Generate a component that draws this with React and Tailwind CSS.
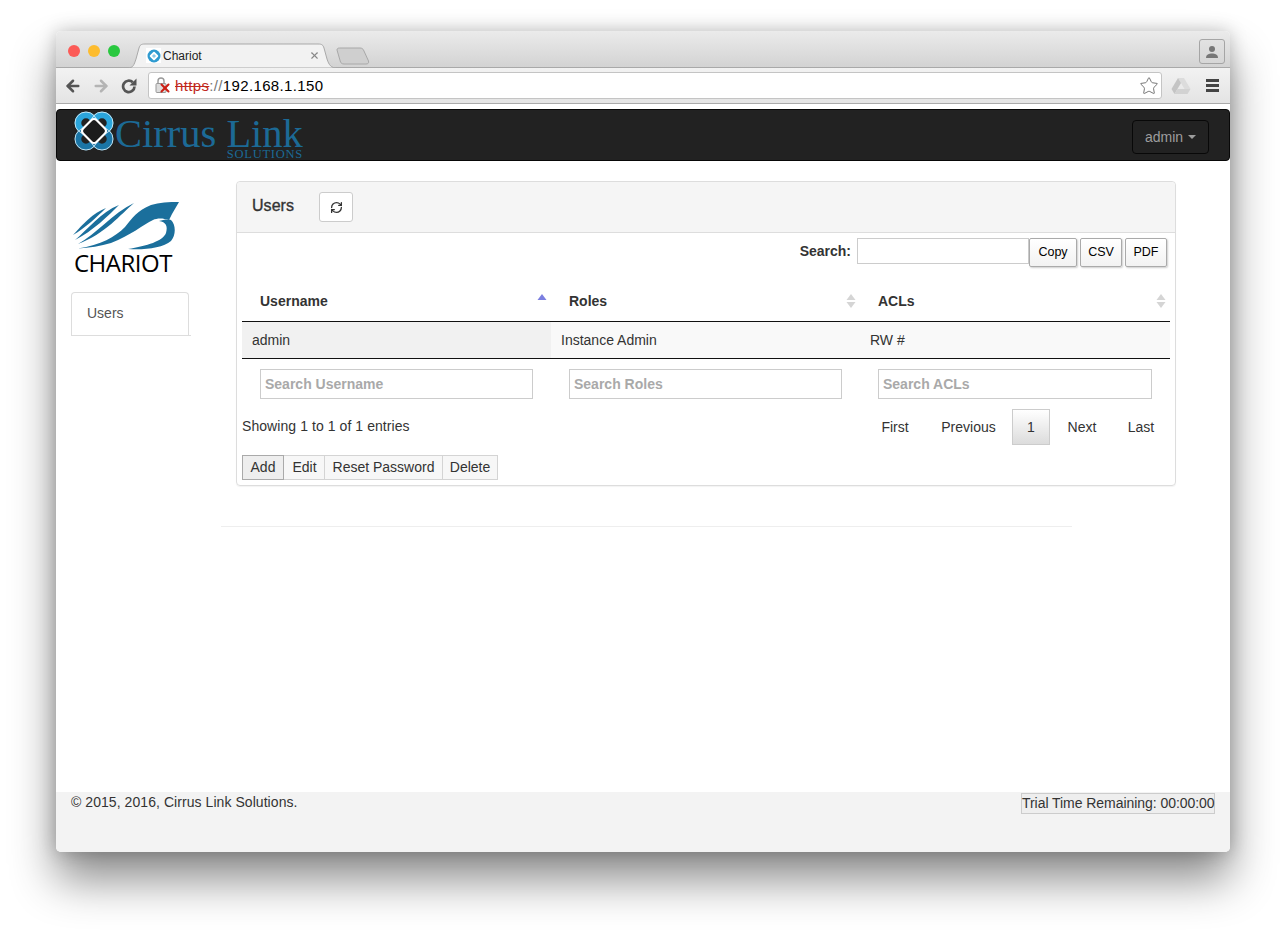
import { ArrowLeft, ArrowRight, Star, RefreshCw, X } from "lucide-react";

const Sort = ({ active }) => (
    <svg width="10" height="16" viewBox="0 0 10 16" className="shrink-0">
        <path d="M5 1 L9.500 7 H0.500 Z" fill={active ? "#7b7fe0" : "#d5d5d5"} />
        {!active && <path d="M5 15 L9.500 9 H0.500 Z" fill="#d5d5d5" />}
    </svg>
);

const CirrusMark = ({ size }) => (
    <svg width={size} height={size} viewBox="0 0 40 40" fill="none" className="shrink-0">
        <circle cx="12" cy="12" r="8" stroke="#2ba5dc" strokeWidth="6.500" />
        <circle cx="28" cy="12" r="8" stroke="#2ba5dc" strokeWidth="6.500" />
        <circle cx="12" cy="28" r="8" stroke="#1b75a6" strokeWidth="6.500" />
        <circle cx="28" cy="28" r="8" stroke="#1b75a6" strokeWidth="6.500" />
        <circle cx="12" cy="12" r="11" stroke="#d5eef9" strokeWidth="0.900" />
        <circle cx="28" cy="12" r="11" stroke="#d5eef9" strokeWidth="0.900" />
        <circle cx="12" cy="28" r="11" stroke="#d5eef9" strokeWidth="0.900" />
        <circle cx="28" cy="28" r="11" stroke="#d5eef9" strokeWidth="0.900" />
        <rect x="10.500" y="10.500" width="19" height="19" rx="3.500" transform="rotate(45 20 20)" fill="#1c1c1c" stroke="#ffffff" strokeWidth="2.200" />
    </svg>
);

const CirrusSmall = () => (
    <span className="relative w-[15px] h-[15px] bg-white flex items-center justify-center shrink-0">
        <svg width="14" height="14" viewBox="0 0 14 14">
            <circle cx="7" cy="7" r="6.500" fill="#2f9bd0" />
            <rect x="3.700" y="3.700" width="6.600" height="6.600" rx="1" transform="rotate(45 7 7)" fill="#ffffff" />
            <rect x="5.500" y="5.500" width="3" height="3" transform="rotate(45 7 7)" fill="#8cc9e6" />
        </svg>
    </span>
);

function Browser() {
    return (
        <div className="rounded-t-[5px]">
            <div className="relative h-[37px] bg-gradient-to-b from-[#ebebeb] to-[#d3d3d3] rounded-t-[5px] border-b border-[#a9a9a9] flex">
                <div className="flex gap-[8px] pl-[12px] pt-[14px]">
                    <span className="w-[12px] h-[12px] rounded-full bg-[#fc5b57]"></span>
                    <span className="w-[12px] h-[12px] rounded-full bg-[#fdbc2e]"></span>
                    <span className="w-[12px] h-[12px] rounded-full bg-[#29c83f]"></span>
                </div>
                <div className="relative ml-[8px] mt-[12px] w-[209px] h-[25px] flex items-center pl-[18px] pr-[17px]">
                    <svg width="209" height="25" viewBox="0 0 209 25" className="absolute left-0 top-0">
                        <path d="M0 25 C5 25 6 22 8 16 L11 5 C12 2 13 1 17 1 H190 C194 1 195 2 196 5 L199 16 C201 22 203 25 209 25 Z" fill="#f2f2f2" stroke="#a9a9a9" />
                    </svg>
                    <CirrusSmall />
                    <span className="relative ml-[2px] text-[12px] text-[#222] grow">Chariot</span>
                    <X size={11} strokeWidth={2.400} className="relative text-[#888]" />
                </div>
                <svg width="34" height="18" viewBox="0 0 34 18" className="mt-[16px] -ml-[1px]">
                    <path d="M1 3 C1 1.500 2 1 3.500 1 H24 C26 1 27 2 27.500 3 L32.500 14 C33 16 32 17 30 17 H8 C6 17 5 16 4.500 15 Z" fill="#cfcfcf" stroke="#a8a8a8" />
                </svg>
                <div className="ml-auto mr-[5px] mt-[8px] w-[26px] h-[25px] rounded-[3px] border border-[#a5a5a5] bg-gradient-to-b from-[#e2e2e2] to-[#d6d6d6] flex items-center justify-center">
                    <svg width="16" height="16" viewBox="0 0 16 16" fill="#777">
                        <circle cx="8" cy="5" r="3" />
                        <path d="M2 14 C2 10.500 5 9.500 8 9.500 C11 9.500 14 10.500 14 14 Z" />
                    </svg>
                </div>
            </div>
            <div className="h-[36px] bg-gradient-to-b from-[#f2f2f2] to-[#e4e4e4] border-b border-[#aaaaaa] flex items-center">
                <ArrowLeft size={18} strokeWidth={3.400} className="ml-[8px] text-[#555]" />
                <ArrowRight size={18} strokeWidth={3.400} className="ml-[10px] text-[#b4b4b4]" />
                <svg width="16" height="16" viewBox="0 0 16 16" fill="none" className="ml-[11px]">
                    <path d="M13.500 8.500 a5.700 5.700 0 1 1 -1.700 -4.200" stroke="#555" strokeWidth="2.700" />
                    <path d="M15.500 0.500 V7.500 H8.500 Z" fill="#555" />
                </svg>
                <div className="ml-[11px] w-[1014px] h-[27px] bg-white rounded-[3px] border border-[#c4c4c4] flex items-center pl-[6px] pr-[2px]">
                    <span className="relative w-[15px] h-[17px] shrink-0">
                        <svg width="12" height="16" viewBox="0 0 12 16" fill="none">
                            <path d="M3 7 V4 a3 3 0 0 1 6 0 V7" stroke="#999" strokeWidth="1.400" />
                            <rect x="1" y="6.500" width="10" height="9" rx="1" fill="#ddd" stroke="#999" />
                        </svg>
                        <X size={14} strokeWidth={3.500} className="absolute left-[3px] top-[4px] text-[#cc1f14]" />
                    </span>
                    <span className="ml-[5px] mt-[1px] text-[15px] tracking-[0.35px]">
                        <span className="text-[#c0281c] line-through">https</span>
                        <span className="text-[#777]">://</span>
                        <span className="text-black">192.168.1.150</span>
                    </span>
                    <Star size={20} strokeWidth={1.200} className="ml-auto text-[#777]" />
                </div>
                <svg width="20" height="18" viewBox="0 0 20 18" className="ml-[9px]">
                    <path d="M7 1 H13 L19.500 12 H13.500 Z" fill="#dcdcdc" />
                    <path d="M7 1 L0.500 12 L3.500 17 L10 6 Z" fill="#c4c4c4" />
                    <path d="M3.500 17 H16.500 L19.500 12 H6.500 Z" fill="#d2d2d2" />
                </svg>
                <div className="ml-[15px] flex flex-col gap-[2px]">
                    <span className="w-[13px] h-[3px] bg-[#444]"></span>
                    <span className="w-[13px] h-[3px] bg-[#444]"></span>
                    <span className="w-[13px] h-[3px] bg-[#444]"></span>
                </div>
            </div>
        </div>
    );
}

function Navbar() {
    return (
        <div className="h-[52px] bg-[#222222] border border-[#080808] rounded-[4px] flex items-start pl-[17px] pr-[20px]">
            <div className="mt-[1px]">
                <CirrusMark size={40} />
            </div>
            <div className="ml-[1px] w-[188px] flex flex-col font-['Liberation_Serif',serif] text-[#1c6a96]">
                <span className="text-[40.500px] leading-[36px] mt-[6px] whitespace-nowrap">Cirrus Link</span>
                <span className="self-end text-[12.500px] leading-[10px] -mt-[3px] tracking-[0.75px]">SOLUTIONS</span>
            </div>
            <button className="ml-auto mt-[10px] w-[77px] h-[34px] border border-[#080808] rounded-[4px] text-[14px] text-[#9d9d9d] flex items-center justify-center gap-[5px]">
                admin
                <span className="w-0 h-0 border-x-[4px] border-x-transparent border-t-[4px] border-t-[#9d9d9d]"></span>
            </button>
        </div>
    );
}

function Sidebar() {
    return (
        <div className="w-[165px] shrink-0 pl-[15px] pt-[20px]">
            <svg width="110" height="50" viewBox="0 0 110 50" className="ml-[2px]">
                <path d="M0 34 C10 23 20 12 33 7 C25 15 12 27 0 34 Z" fill="#1b6f9c" />
                <path d="M2 39 C14 29 28 11 46 4 C36 14 20 30 2 39 Z" fill="#1b6f9c" />
                <path d="M5 43 C22 34 40 12 61 2 C48 13 32 33 5 43 Z" fill="#1b6f9c" />
                <path d="M5 47.500 C28 44 42 36 52 26 C60 16 64 10 78 4 C86 1.500 96 1 106 1 L99 13 L96 19 C90 17 84 17 80 19 C70 24 58 34 38 42 C28 45 16 47 5 47.500 Z" fill="#1b6f9c" />
                <path d="M86 20 C93 21 95 25 93 32 C90 40 74 45 55 48 C72 49 90 47 98 40 C103 34 103 24 98 19 C94 18 90 19 86 20 Z" fill="#1b6f9c" />
            </svg>
            <div className="ml-[3px] font-['Open_Sans',sans-serif] text-[24px] leading-[24px] text-black whitespace-nowrap tracking-[-0.5px]">CHARIOT</div>
            <div className="relative mt-[17px] w-[118px] h-[44px] border border-[#dddddd] border-b-0 rounded-t-[4px] flex items-center pl-[15px] pb-[2px] text-[14px] text-[#555]">
                Users
                <span className="absolute bottom-0 -left-px w-[120px] h-px bg-[#dddddd]"></span>
            </div>
        </div>
    );
}

const columns = ["Username", "Roles", "ACLs"];
const placeholders = ["Search Username", "Search Roles", "Search ACLs"];

function Panel() {
    return (
        <div className="w-[940px] h-[305px] border border-[#dddddd] rounded-[4px] text-[14px] text-[#333] shadow-[0_1px_1px_rgba(0,0,0,0.05)]">
            <div className="h-[51px] bg-[#f5f5f5] border-b border-[#dddddd] rounded-t-[4px] flex items-center pl-[15px]">
                <span className="text-[16px] text-[#333] -mt-[2px] tracking-[0.05px] [-webkit-text-stroke:0.35px_#333]">Users</span>
                <button className="ml-[25px] w-[34px] h-[30px] bg-white border border-[#cccccc] rounded-[3px] flex items-center justify-center">
                    <RefreshCw size={13} strokeWidth={2.400} className="text-[#333]" />
                </button>
            </div>
            <div className="px-[5px]">
                <div className="h-[48px] flex items-start justify-end pr-[3px] pt-[5px]">
                    <span className="font-bold mr-[6px] leading-[26px]">Search:</span>
                    <div className="w-[172px] h-[26px] border border-[#cccccc] bg-white"></div>
                    <button className="h-[29px] w-[48px] border border-[#aaaaaa] rounded-[2px] bg-gradient-to-b from-white to-[#f2f2f2] shadow-[1px_1px_2px_rgba(0,0,0,0.2)] text-[12.500px] text-black">Copy</button>
                    <button className="h-[29px] w-[42px] ml-[3px] border border-[#aaaaaa] rounded-[2px] bg-gradient-to-b from-white to-[#f2f2f2] shadow-[1px_1px_2px_rgba(0,0,0,0.2)] text-[12.500px] text-black">CSV</button>
                    <button className="h-[29px] w-[42px] ml-[3px] border border-[#aaaaaa] rounded-[2px] bg-gradient-to-b from-white to-[#f2f2f2] shadow-[1px_1px_2px_rgba(0,0,0,0.2)] text-[12.500px] text-black">PDF</button>
                </div>
                <div className="grid grid-cols-[309px_309px_310px] h-[41px] border-b border-[#111111] font-bold">
                    {columns.map((c, i) => (
                        <div key={c} className="flex items-center justify-between pl-[18px] pr-[4px]">
                            {c}
                            <Sort active={i === 0} />
                        </div>
                    ))}
                </div>
                <div className="grid grid-cols-[309px_309px_310px] h-[37px] border-b border-[#111111] bg-[#f9f9f9] items-center">
                    <div className="h-full bg-[#f1f1f1] flex items-center pl-[10px]">admin</div>
                    <div className="pl-[10px]">Instance Admin</div>
                    <div className="pl-[10px]">RW #</div>
                </div>
                <div className="grid grid-cols-[309px_309px_310px] pt-[10px]">
                    {placeholders.map((p) => (
                        <div key={p} className="px-[18px]">
                            <input readOnly placeholder={p} className="w-full h-[30px] border border-[#cccccc] px-[4px] text-[14px] font-bold placeholder:text-[#a9a9a9] outline-none" />
                        </div>
                    ))}
                </div>
                <div className="h-[46px] flex items-start pt-[10px] pr-[2px]">
                    <span className="leading-[35px] tracking-[0.07px]">Showing 1 to 1 of 1 entries</span>
                    <div className="ml-auto flex items-center h-[36px] text-[#333]">
                        <span className="w-[62px] text-center">First</span>
                        <span className="w-[83px] text-center ml-[1px]">Previous</span>
                        <span className="w-[38px] h-[36px] ml-[2px] border border-[#cccccc] bg-gradient-to-b from-white to-[#dcdcdc] flex items-center justify-center">1</span>
                        <span className="w-[64px] text-center">Next</span>
                        <span className="w-[54px] text-center">Last</span>
                    </div>
                </div>
                <div className="flex mt-[10px] h-[25px]">
                    <button className="w-[42px] border border-[#aaaaaa] bg-[#eeeeee]">Add</button>
                    <button className="w-[41px] pl-[1px] border border-l-0 border-[#d4d4d4] bg-[#f7f7f7]">Edit</button>
                    <button className="w-[118px] border border-l-0 border-[#d4d4d4] bg-[#f7f7f7]">Reset Password</button>
                    <button className="w-[55px] border border-l-0 border-[#d4d4d4] bg-[#f7f7f7]">Delete</button>
                </div>
            </div>
        </div>
    );
}

export default function App() {
    return (
        <div className="h-[932px] overflow-hidden bg-white pl-[56px] pt-[31px] font-['Liberation_Sans',Arial,sans-serif]">
            <div className="w-[1174px] h-[821px] bg-white rounded-[5px] flex flex-col shadow-[0_28px_45px_rgba(0,0,0,0.45),0_0_18px_rgba(0,0,0,0.22)]">
                <Browser />
                <div className="h-[5px]"></div>
                <Navbar />
                <div className="flex pt-[20px] grow">
                    <Sidebar />
                    <div className="min-w-0">
                        <div className="ml-[15px]"><Panel /></div>
                        <div className="mt-[40px] w-[851px] h-px bg-[#eeeeee]"></div>
                    </div>
                </div>
                <div className="h-[60px] bg-[#f3f3f3] rounded-b-[5px] flex items-start justify-between px-[15px] text-[14px] text-[#333]">
                    <span className="leading-[20px] tracking-[0.06px]">© 2015, 2016, Cirrus Link Solutions.</span>
                    <span className="mt-[1px] w-[194px] h-[21px] border border-[#cccccc] bg-[#eeeeee] text-center leading-[19px] whitespace-nowrap tracking-[-0.05px]">Trial Time Remaining: 00:00:00</span>
                </div>
            </div>
        </div>
    );
}
